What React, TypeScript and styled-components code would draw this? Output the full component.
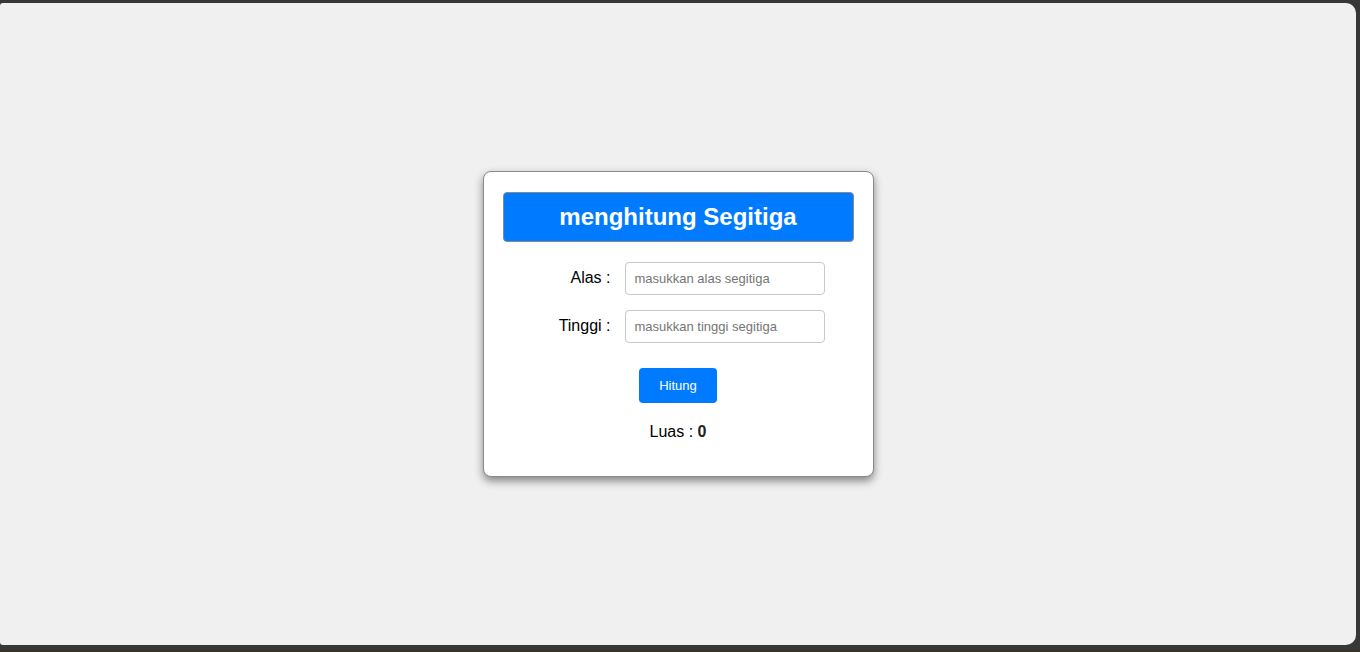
import React, { useState } from "react";
import styled, { createGlobalStyle } from "styled-components";

const Global = createGlobalStyle`
  html, body { margin: 0; padding: 0; }
  body {
    background: #373737;
    font-family: "Liberation Sans", Arial, sans-serif;
    height: 652px;
    overflow: hidden;
  }
  * { box-sizing: border-box; }
`;

const Frame = styled.div`
  height: 652px;
  padding: 3px 4px 0 0;
  background: #373737;
  border-bottom: 2px solid #3b3226;
`;

const Viewport = styled.main`
  height: 642px;
  background: #f0f0f0;
  border-radius: 3px 10px 10px 3px;
  display: flex;
  align-items: center;
  justify-content: center;
`;

const Card = styled.section`
  width: 391px;
  background: #ffffff;
  border: 1px solid #8a8a8a;
  border-radius: 8px;
  box-shadow: 0 4px 8px rgba(0, 0, 0, 0.45);
  padding: 20px 19px 35px 19px;
  display: flex;
  flex-direction: column;
`;

const Title = styled.h1`
  margin: 0 0 20px;
  height: 50px;
  background: #007bff;
  border: 1px solid #8a8a8a;
  border-radius: 4px;
  color: #ffffff;
  font-size: 24px;
  font-weight: bold;
  display: flex;
  align-items: center;
  justify-content: center;
`;

const Row = styled.div<{ $gap?: number }>`
  display: grid;
  grid-template-columns: 107px 200px;
  column-gap: 15px;
  align-items: center;
  margin-bottom: ${(p) => p.$gap ?? 15}px;
`;

const Label = styled.label`
  text-align: right;
  font-size: 16px;
  color: #000;
  padding-bottom: 1px;
  margin-right: -1px;
`;

const Input = styled.input`
  height: 33px;
  width: 200px;
  border: 1px solid #c8c8c8;
  border-radius: 4px;
  padding: 0 9px;
  font-family: "Liberation Sans", Arial, sans-serif;
  font-size: 13px;
  outline: none;
  &::placeholder { color: #757575; }
`;

const Button = styled.button`
  align-self: center;
  width: 78px;
  height: 35px;
  background: #007bff;
  color: #fff;
  border: none;
  border-radius: 4px;
  font-family: "Liberation Sans", Arial, sans-serif;
  font-size: 13px;
  cursor: pointer;
`;

const Result = styled.p`
  margin: 20px 0 0;
  text-align: center;
  font-size: 16px;
  color: #000;
  line-height: 18px;
  b { font-weight: bold; color: #222; }
`;

export default function App() {
  const [alas, setAlas] = useState("");
  const [tinggi, setTinggi] = useState("");
  const [luas, setLuas] = useState(0);
  return (
    <>
      <Global />
      <Frame>
        <Viewport>
          <Card>
            <Title>menghitung Segitiga</Title>
            <Row>
              <Label>Alas :</Label>
              <Input
                placeholder="masukkan alas segitiga"
                value={alas}
                onChange={(e) => setAlas(e.target.value)}
              />
            </Row>
            <Row $gap={25}>
              <Label>Tinggi :</Label>
              <Input
                placeholder="masukkan tinggi segitiga"
                value={tinggi}
                onChange={(e) => setTinggi(e.target.value)}
              />
            </Row>
            <Button onClick={() => setLuas((Number(alas) * Number(tinggi)) / 2 || 0)}>Hitung</Button>
            <Result>
              Luas : <b>{luas}</b>
            </Result>
          </Card>
        </Viewport>
      </Frame>
    </>
  );
}
